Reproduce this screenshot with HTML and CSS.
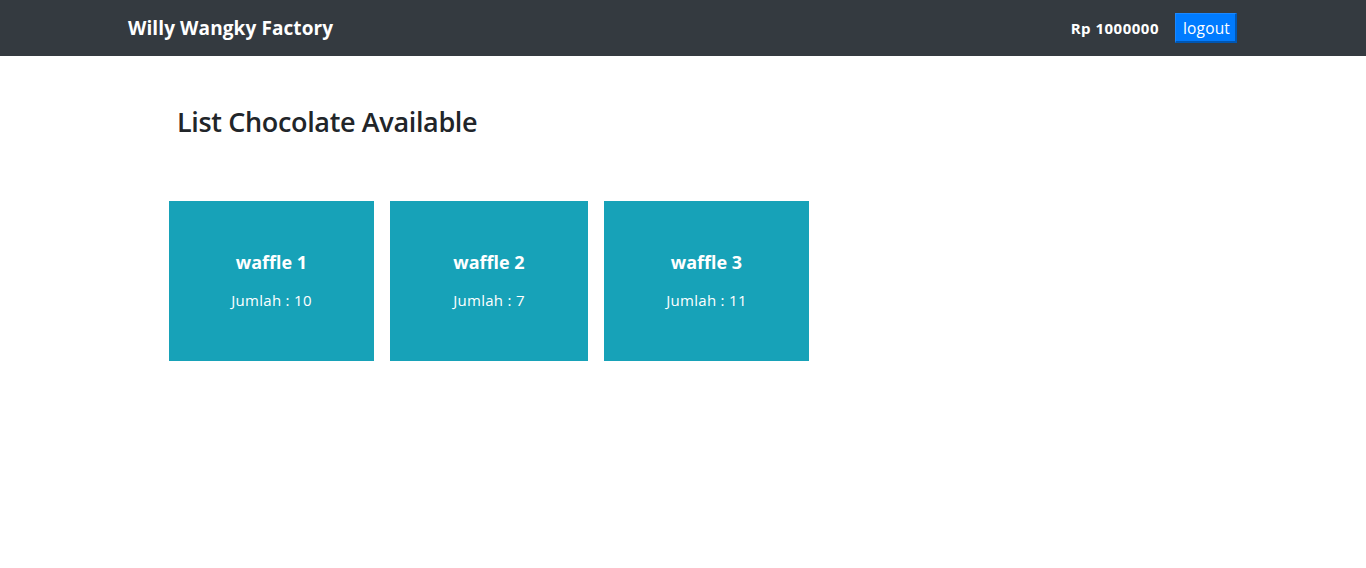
FILE: index.html
```html
<!DOCTYPE html>
<html lang="id">
<head>
<meta charset="utf-8">
<title>Willy Wangky Factory</title>
<link rel="stylesheet" href="styles.css">
</head>
<body>
<nav class="navbar">
  <div class="nav-inner">
    <span class="brand">Willy Wangky Factory</span>
    <div class="nav-right">
      <span class="saldo">Rp 1000000</span>
      <button class="logout">logout</button>
    </div>
  </div>
</nav>
<main class="content">
  <h2 class="title">List Chocolate Available</h2>
  <div class="cards">
    <div class="card card-wide">
      <div class="card-name">waffle 1</div>
      <div class="card-qty">Jumlah : 10</div>
    </div>
    <div class="card card-narrow">
      <div class="card-name">waffle 2</div>
      <div class="card-qty">Jumlah : 7</div>
    </div>
    <div class="card card-wide">
      <div class="card-name">waffle 3</div>
      <div class="card-qty">Jumlah : 11</div>
    </div>
  </div>
</main>
</body>
</html>
```
FILE: styles.css
```css
* { box-sizing: border-box; }
body {
  margin: 0;
  font-family: "Open Sans", "Noto Sans", "DejaVu Sans", sans-serif;
  color: #212529;
  background: #fff;
}
.navbar {
  background: #343a40;
  height: 56px;
}
.nav-inner {
  width: 1110px;
  margin: 0 auto;
  height: 100%;
  display: flex;
  align-items: center;
  justify-content: space-between;
}
.brand {
  color: #fff;
  font-weight: 700;
  font-size: 19px;
  letter-spacing: 0.1px;
}
.nav-right {
  display: flex;
  align-items: center;
  gap: 16px;
  padding-right: 1px;
}
.saldo {
  color: #fff;
  font-weight: 700;
  font-size: 15px;
  letter-spacing: 0.5px;
}
.logout {
  background: #007bff;
  color: #fff;
  border-style: solid;
  border-width: 1px 2px 2px 1px;
  border-color: #1a88ff #0056b3 #0056b3 #1a88ff;
  font-family: inherit;
  font-size: 15.5px;
  letter-spacing: 0.2px;
  height: 30px;
  width: 62px;
  padding: 0 0 0 2px;
  line-height: 26px;
}
.content {
  padding: 0 0 0 169px;
}
.title {
  margin: 0;
  padding: 48px 0 0 8px;
  font-size: 27px;
  font-weight: 600;
  line-height: 36px;
  letter-spacing: -0.35px;
  color: #212529;
}
.cards {
  margin-top: 61px;
  display: flex;
  gap: 16px;
}
.card {
  height: 160px;
  background: #17a2b8;
  color: #fff;
  display: flex;
  flex-direction: column;
  align-items: center;
  justify-content: center;
  padding-bottom: 2px;
}
.card-wide { width: 205px; }
.card-narrow { width: 198px; }
.card-name {
  font-weight: 700;
  font-size: 18px;
  line-height: 24px;
}
.card-qty {
  margin-top: 16px;
  font-size: 15px;
  line-height: 20px;
  letter-spacing: 0.3px;
}
```
